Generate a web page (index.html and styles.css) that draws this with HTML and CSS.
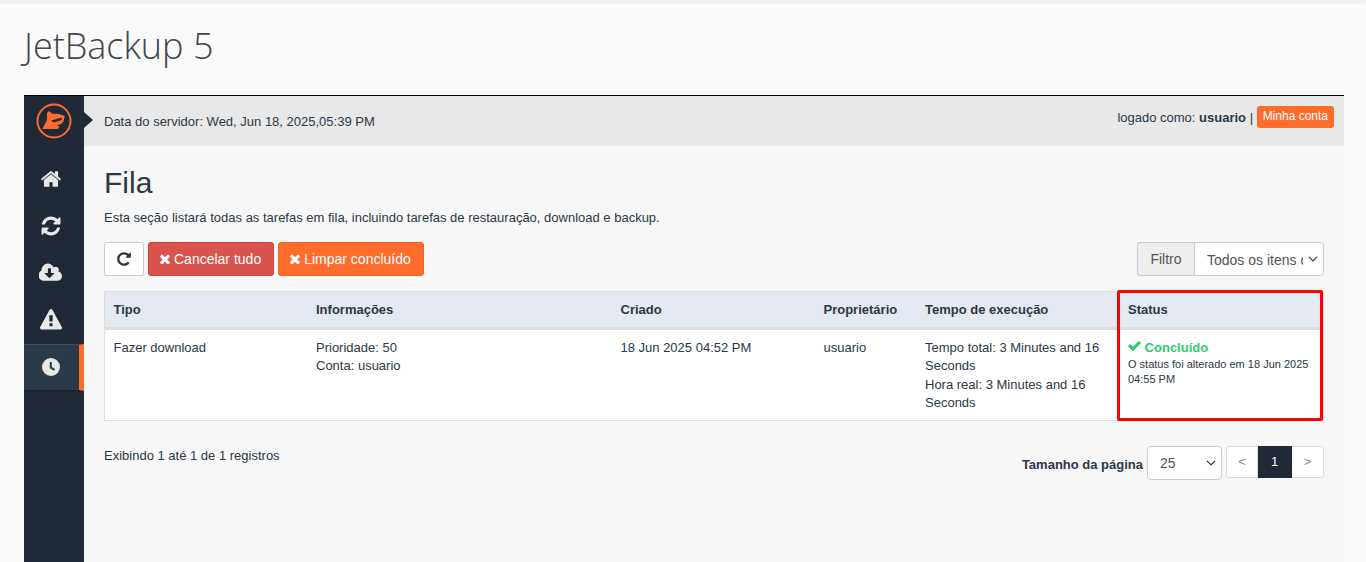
FILE: index.html
```html
<!DOCTYPE html>
<html lang="pt">
<head>
<meta charset="utf-8">
<title>JetBackup 5</title>
<link rel="stylesheet" href="styles.css">
</head>
<body>
<div class="topshadow"></div>
<h1 class="apptitle">JetBackup 5</h1>
<div class="shell">
  <nav class="side">
    <div class="logo">
      <svg viewBox="0 0 36 36" width="36" height="36"><circle cx="18" cy="18" r="16.500" fill="none" stroke="#ff6c2c" stroke-width="2"/><path fill="#ff6c2c" fill-rule="evenodd" d="M11 10L13 8L16.300 10.700L23 11L28.700 13L27.500 18.500L25 21L20.500 22.500L23.500 23.500L22 26L6.300 26L11 17ZM15 17.500L26 14.500L25.500 17L18 19.500Z"/></svg>
    </div>
    <a class="navitem"><svg class="nico" viewBox="0 0 1792 1792"><path d="M1472 992v480q0 26-19 45t-45 19h-384v-384h-256v384h-384q-26 0-45-19t-19-45v-480q0-1 .5-3t.5-3l575-474 575 474q1 2 1 6zm223-69l-62 74q-8 9-21 11h-3q-13 0-21-7l-692-577-692 577q-12 8-24 7-13-2-21-11l-62-74q-8-10-7-23.500t11-21.500l719-599q32-26 76-26t76 26l244 204v-195q0-14 9-23t23-9h192q14 0 23 9t9 23v408l219 182q10 8 11 21.500t-7 23.500z"/></svg></a>
    <a class="navitem"><svg class="nico" viewBox="0 0 1792 1792"><path d="M1639 1056q0 5-1 7-64 268-268 434.500t-478 166.500q-146 0-282.500-55t-243.500-157l-129 129q-19 19-45 19t-45-19-19-45v-448q0-26 19-45t45-19h448q26 0 45 19t19 45-19 45l-137 137q71 66 161 102t187 36q134 0 250-65t186-179q11-17 53-117 8-23 30-23h192q13 0 22.500 9.500t9.500 22.500zm25-800v448q0 26-19 45t-45 19h-448q-26 0-45-19t-19-45 19-45l138-138q-148-137-349-137-134 0-250 65t-186 179q-11 17-53 117-8 23-30 23h-199q-13 0-22.500-9.500t-9.500-22.500v-7q65-268 270-434.500t480-166.500q146 0 284 55.500t245 156.500l130-129q19-19 45-19t45 19 19 45z"/></svg></a>
    <a class="navitem"><svg class="nico wide" viewBox="0 0 1920 1792"><path d="M1216 928q0-14-9-23t-23-9h-224v-352q0-13-9.500-22.500t-22.500-9.500h-192q-13 0-22.500 9.500t-9.500 22.500v352h-224q-13 0-22.500 9.500t-9.500 22.500q0 14 9 23l352 352q9 9 23 9t23-9l351-351q10-12 10-24zm640 224q0 159-112.500 271.500t-271.500 112.500h-1088q-185 0-316.500-131.500t-131.500-316.500q0-130 70-240t188-165q-2-30-2-43 0-212 150-362t362-150q156 0 285.500 87t188.500 231q71-62 166-62 106 0 181 75t75 181q0 76-41 138 130 31 213.500 135.500t83.500 238.500z"/></svg></a>
    <a class="navitem"><svg class="nico" viewBox="0 0 1792 1792"><path d="M1024 1375v-190q0-14-9.500-23.500t-22.500-9.500h-192q-13 0-22.500 9.500t-9.500 23.500v190q0 14 9.500 23.500t22.500 9.500h192q13 0 22.500-9.500t9.500-23.500zm-2-374l18-459q0-12-10-19-13-11-24-11h-220q-11 0-24 11-10 7-10 21l17 457q0 10 10 16.500t24 6.500h185q14 0 23.500-6.500t10.500-16.500zm-14-934l768 1408q35 63-2 126-17 29-46.500 46t-63.500 17h-1536q-34 0-63.500-17t-46.500-46q-37-63-2-126l768-1408q17-31 47-49t65-18 65 18 47 49z"/></svg></a>
    <a class="navitem active"><svg class="nico clock" viewBox="0 0 20 20"><path fill-rule="evenodd" d="M10 1a9 9 0 1 1 0 18 9 9 0 0 1 0-18zM8.800 5v6.200l4.300 2.600 1-1.700-3.300-2V5z"/></svg></a>
  </nav>
  <div class="main">
    <header class="bar">
      <span class="notch"></span>
      <span class="date">Data do servidor: Wed, Jun 18, 2025,05:39 PM</span>
      <span class="user">logado como: <b>usuario</b> | <a class="acct">Minha conta</a></span>
    </header>
    <section class="content">
      <h2 class="pagetitle">Fila</h2>
      <p class="desc">Esta seção listará todas as tarefas em fila, incluindo tarefas de restauração, download e backup.</p>
      <div class="toolbar">
        <button class="btn btn-plain"><svg class="ico16" viewBox="0 0 1792 1792"><path d="M1664 256v448q0 26-19 45t-45 19h-448q-42 0-59-40-17-39 14-69l138-138q-148-137-349-137-104 0-198.500 40.500t-163.500 109.500-109.500 163.500-40.500 198.500 40.500 198.500 109.500 163.500 163.500 109.500 198.500 40.500q119 0 225-52t179-147q7-10 23-12 15 0 25 9l137 138q9 8 9.500 20.500t-7.500 22.500q-109 132-264 204.500t-327 72.500q-156 0-298-61t-245-164-164-245-61-298 61-298 164-245 245-164 298-61q147 0 284.500 55.500t244.500 156.500l130-129q29-31 70-14 39 17 39 59z"/></svg></button>
        <button class="btn btn-red"><svg class="ico14" viewBox="300 300 1200 1200"><path d="M1490 1322q0 40-28 68l-136 136q-28 28-68 28t-68-28l-294-294-294 294q-28 28-68 28t-68-28l-136-136q-28-28-28-68t28-68l294-294-294-294q-28-28-28-68t28-68l136-136q28-28 68-28t68 28l294 294 294-294q28-28 68-28t68 28l136 136q28 28 28 68t-28 68l-294 294 294 294q28 28 28 68z"/></svg> Cancelar tudo</button>
        <button class="btn btn-orange"><svg class="ico14" viewBox="300 300 1200 1200"><path d="M1490 1322q0 40-28 68l-136 136q-28 28-68 28t-68-28l-294-294-294 294q-28 28-68 28t-68-28l-136-136q-28-28-28-68t28-68l294-294-294-294q-28-28-28-68t28-68l136-136q28-28 68-28t68 28l294 294 294-294q28-28 68-28t68 28l136 136q28 28 28 68t-28 68l-294 294 294 294q28 28 28 68z"/></svg> Limpar concluído</button>
        <div class="filter">
          <span class="filter-label">Filtro</span>
          <select class="filter-select"><option>Todos os itens da fila</option></select>
        </div>
      </div>
      <div class="tablewrap">
        <table class="grid">
          <colgroup><col class="c1"><col class="c2"><col class="c3"><col class="c4"><col class="c5"><col class="c6"></colgroup>
          <thead><tr><th>Tipo</th><th>Informações</th><th>Criado</th><th>Proprietário</th><th>Tempo de execução</th><th>Status</th></tr></thead>
          <tbody><tr>
            <td>Fazer download</td>
            <td>Prioridade: 50<br>Conta: usuario</td>
            <td>18 Jun 2025 04:52 PM</td>
            <td>usuario</td>
            <td>Tempo total: 3 Minutes and 16 Seconds<br>Hora real: 3 Minutes and 16 Seconds</td>
            <td><div class="done"><svg class="ico-check" viewBox="100 350 1600 1250"><path d="M1671 566q0 40-28 68l-724 724-136 136q-28 28-68 28t-68-28l-136-136-362-362q-28-28-28-68t28-68l136-136q28-28 68-28t68 28l294 295 656-657q28-28 68-28t68 28l136 136q28 28 28 68z"/></svg> Concluído</div><div class="changed">O status foi alterado em 18 Jun 2025 04:55 PM</div></td>
          </tr></tbody>
        </table>
        <div class="highlight"></div>
      </div>
      <div class="foot">
        <span class="count">Exibindo 1 até 1 de 1 registros</span>
        <div class="pager">
          <b class="pagesize">Tamanho da página</b>
          <select class="size-select"><option>25</option></select>
          <div class="pages"><a class="pg">&lt;</a><a class="pg cur">1</a><a class="pg">&gt;</a></div>
        </div>
      </div>
    </section>
  </div>
</div>
</body>
</html>
```
FILE: styles.css
```css
* { box-sizing: border-box; }
html, body { height: 562px; overflow: hidden; }
body { margin: 0; background: #fafafa; color: #2c3846; font: 13px/1.42857 "Liberation Sans", Arial, sans-serif; }
.topshadow { height: 2px; background: #f1f1f1; box-shadow: 0 1px 3px rgba(0,0,0,.08); }
.apptitle { margin: 0; padding: 20px 0 0 24px; height: 93px; font: 300 36px/48px "Open Sans", sans-serif; color: #3f4448; }
.shell { display: flex; margin: 0 22px 0 24px; height: 467px; border-top: 1px solid #000; background: #f7f7f7; }
.side { width: 60px; flex: none; background: #1f2a36; display: flex; flex-direction: column; }
.logo { height: 50px; margin-bottom: 10px; display: flex; align-items: center; justify-content: center; }
.navitem { height: 47px; padding: 0 6px 1px 0; display: flex; align-items: center; justify-content: center; }
.nico { width: 22px; height: 22px; fill: #e8e8e8; }
.nico.wide { width: 24px; }
.navitem.active { background: #2b3a49; border-top: 1px solid #3f4c59; border-bottom: 1px solid #1a232d; border-right: 5px solid #ff6c2c; padding: 0 1px 1px 0; }
.nico.clock { width: 20px; height: 20px; }
.main { flex: 1; min-width: 0; }
.bar { position: relative; height: 50px; background: #e8e8e8; display: flex; justify-content: space-between; padding: 8px 10px 0 20px; }
.notch { position: absolute; left: 0; top: 16px; border-left: 9px solid #1f2a36; border-top: 8.500px solid transparent; border-bottom: 8.500px solid transparent; }
.date { font-size: 13px; line-height: 36px; }
.user { font-size: 13px; line-height: 27px; }
.acct { display: inline-block; padding: 0 6px; height: 22px; line-height: 21px; font-size: 12px; color: #fff; background: #ff6c2c; border-radius: 3px; vertical-align: 2px; }
.content { padding: 0 20px; }
.pagetitle { margin: 0; padding-top: 19px; font: 400 30px/36px "Liberation Sans", sans-serif; color: #2c3846; }
.desc { margin: 8px 0 0; font-size: 13px; line-height: 18px; }
.toolbar { display: flex; gap: 4px; margin-top: 15px; height: 34px; }
.btn { height: 34px; border-radius: 3px; border: 1px solid; font: 14px/20px "Liberation Sans", sans-serif; color: #fff; padding: 0 12px 0 11px; display: inline-flex; align-items: center; gap: 4px; }
.btn svg { fill: currentColor; }
.btn-plain { width: 40px; justify-content: center; padding: 0; background: #fff; border-color: #ccc; color: #333; }
.btn-red { background: #d9534f; border-color: #d43f3a; }
.btn-orange { background: #ff6c2c; border-color: #f4641f; }
.ico16 { width: 16px; height: 16px; }
.ico14 { width: 10px; height: 10px; }
.filter { margin-left: auto; display: flex; height: 34px; }
.filter-label { width: 57px; text-align: center; line-height: 32px; font-size: 14px; color: #555; background: #eee; border: 1px solid #ccc; border-right: 0; border-radius: 3px 0 0 3px; }
select { appearance: none; -webkit-appearance: none; background: #fff url("data:image/svg+xml,%3Csvg xmlns='http://www.w3.org/2000/svg' viewBox='0 0 16 16'%3E%3Cpath fill='none' stroke='%23343a40' stroke-linecap='round' stroke-linejoin='round' stroke-width='2' d='M2 5l6 6 6-6'/%3E%3C/svg%3E") no-repeat right 4px center / 12px 10px; }
.filter-select { width: 130px; height: 34px; padding: 1px 20px 0 12px; font: 14px "Liberation Sans", sans-serif; color: #555; border: 1px solid #ccc; border-radius: 0 4px 4px 0; }
.tablewrap { position: relative; margin-top: 15px; }
.grid { width: 1220px; table-layout: fixed; border-collapse: collapse; background: #fff; border: 1px solid #ddd; }
.c1 { width: 203px; } .c2 { width: 304.500px; } .c3 { width: 203px; } .c4 { width: 101.500px; } .c5 { width: 203px; } .c6 { width: 204px; }
.grid th { height: 37px; padding: 2px 8.500px 0; text-align: left; font-size: 13px; background: #e4e9f2; border-bottom: 3px solid #ddd; }
.grid td { vertical-align: top; padding: 9px 8.500px 7px; height: 91px; font-size: 13px; line-height: 18.400px; }
.done { color: #2ecc71; font-weight: 700; font-size: 13px; line-height: 18px; }
.ico-check { width: 13px; height: 11px; fill: #2ecc71; }
.changed { font-size: 11px; line-height: 15px; }
.highlight { position: absolute; left: 1013px; top: -1px; width: 206px; height: 131px; border: 3px solid #f00; border-radius: 2px; }
.foot { display: flex; justify-content: space-between; align-items: flex-start; margin-top: 25px; }
.count { font-size: 13px; padding-top: 1px; }
.pager { display: flex; align-items: flex-start; gap: 4px; }
.pagesize { font-size: 13px; padding-top: 10px; }
.size-select { width: 75px; height: 34px; padding: 1px 20px 0 12px; font: 14px "Liberation Sans", sans-serif; color: #555; border: 1px solid #ccc; border-radius: 4px; }
.pages { display: flex; height: 32px; }
.pg { width: 32px; line-height: 30px; text-align: center; background: #fff; border: 1px solid #ddd; border-left: 0; color: #888; font-size: 13px; }
.pg:first-child { border-left: 1px solid #ddd; border-radius: 3px 0 0 3px; }
.pg:last-child { border-radius: 0 3px 3px 0; }
.pg.cur { background: #1f2a36; border-color: #1f2a36; color: #fff; width: 34px; }
```
